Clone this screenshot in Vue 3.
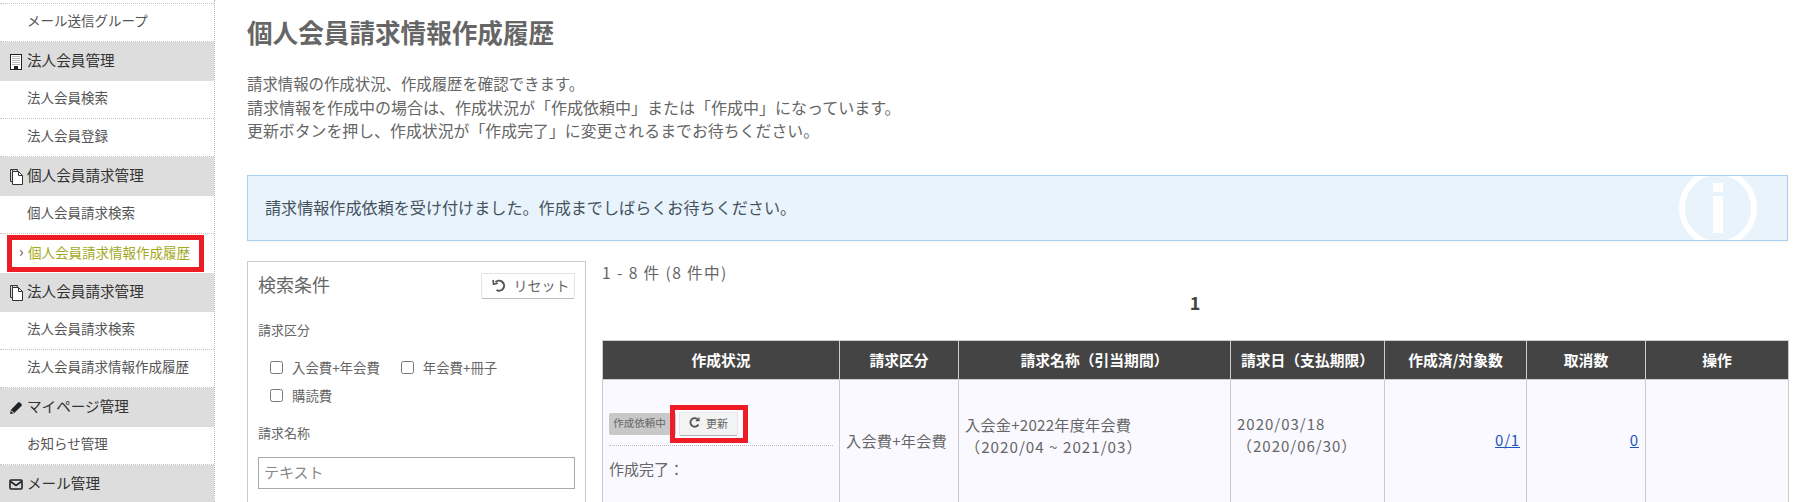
<script setup>
const menu = [
  { label: 'メール送信グループ', first: true },
  { label: '法人会員管理', head: true, icon: 'building' },
  { label: '法人会員検索' },
  { label: '法人会員登録' },
  { label: '個人会員請求管理', head: true, icon: 'file' },
  { label: '個人会員請求検索' },
  { label: '個人会員請求情報作成履歴', active: true },
  { label: '法人会員請求管理', head: true, icon: 'file' },
  { label: '法人会員請求検索' },
  { label: '法人会員請求情報作成履歴' },
  { label: 'マイページ管理', head: true, icon: 'pencil' },
  { label: 'お知らせ管理' },
  { label: 'メール管理', head: true, icon: 'mail' },
]
const columns = ['作成状況', '請求区分', '請求名称（引当期間）', '請求日（支払期限）', '作成済/対象数', '取消数', '操作']
const widths = [237, 119, 272, 154, 142, 119, 143]
</script>

<template>
  <div class="page">
    <aside class="side">
      <div
        v-for="m in menu"
        :key="m.label"
        :class="m.head ? 'head' : 'item'"
        class="row"
        :data-first="m.first ? '' : null"
        :data-active="m.active ? '' : null"
      >
        <span v-if="m.head" class="ico">
          <svg v-if="m.icon === 'building'" width="14" height="16" viewBox="0 0 14 16">
            <rect x="1.5" y="0.5" width="11" height="15" fill="#fff" stroke="#222" />
            <path d="M3.5 2.5h7M3.5 4.5h7M3.5 6.5h7M3.5 8.5h7M3.5 10.5h7" stroke="#777" stroke-dasharray="1 1" />
            <rect x="5" y="12" width="4" height="3.5" fill="#222" />
          </svg>
          <svg v-else-if="m.icon === 'file'" width="15" height="17" viewBox="0 0 15 17" fill="none" stroke="#333">
            <path d="M3.5 3.5V1.5h5l-.5 2" />
            <path d="M1.5 3.5v-2h2M1.5 3.5v10h2" />
            <path d="M3.5 3.5h6l4 4v9h-10z" fill="#fff" />
            <path d="M9.5 3.5v4h4" />
          </svg>
          <svg v-else-if="m.icon === 'pencil'" width="14" height="14" viewBox="0 0 14 14">
            <path d="M1 13l.8-4L9 1.6c.6-.6 1.4-.6 2 0l1.4 1.4c.6.6.6 1.4 0 2L5 12.2z" fill="#222" />
            <path d="M2 9.5l2.5 2.5" stroke="#fff" />
          </svg>
          <svg v-else width="14" height="11" viewBox="0 0 14 11" fill="none" stroke="#222" stroke-width="1.6">
            <rect x="1" y="1" width="12" height="9" rx="1" />
            <path d="M1.5 2.5L7 6.5l5.5-4" />
          </svg>
        </span>
        <span v-if="m.active" class="chev">›</span>
        <span>{{ m.label }}</span>
        <span v-if="m.active" class="mark"></span>
      </div>
    </aside>

    <main class="main">
      <h1 class="title">個人会員請求情報作成履歴</h1>
      <div class="desc">
        <div class="l1">請求情報の作成状況、作成履歴を確認できます。</div>
        <div class="l2">請求情報を作成中の場合は、作成状況が「作成依頼中」または「作成中」になっています。</div>
        <div class="l3">更新ボタンを押し、作成状況が「作成完了」に変更されるまでお待ちください。</div>
      </div>

      <div class="alert">
        <span>請求情報作成依頼を受け付けました。作成までしばらくお待ちください。</span>
        <svg class="alert-ico" width="78" height="78" viewBox="0 0 78 78">
          <circle cx="39" cy="39" r="36" fill="none" stroke="#fff" stroke-width="6" />
          <rect x="34" y="14" width="10" height="9" fill="#fff" />
          <rect x="34" y="27" width="10" height="37" fill="#fff" />
        </svg>
      </div>

      <div class="split">
        <section class="panel">
          <div class="panel-head">
            <span class="panel-title">検索条件</span>
            <button class="reset">
              <svg width="14" height="13" viewBox="0 0 14 13" fill="none" stroke="#555" stroke-width="2">
                <path d="M3.5 3.2A5 5 0 1 1 4.5 11" />
                <path d="M1 .8l.6 4.4 4.2-.9" stroke-width="1.6" />
              </svg>
              リセット
            </button>
          </div>
          <div class="label lab1">請求区分</div>
          <div class="checks">
            <label class="chk"><input type="checkbox" />入会費+年会費</label>
            <label class="chk"><input type="checkbox" />年会費+冊子</label>
            <label class="chk"><input type="checkbox" />購読費</label>
          </div>
          <div class="label lab2">請求名称</div>
          <input class="text" type="text" placeholder="テキスト" />
        </section>

        <section class="result">
          <div class="count">1 - 8 件 (8 件中)</div>
          <div class="pager">1</div>
          <table class="tbl">
            <colgroup>
              <col v-for="w in widths" :key="w" :width="w" />
            </colgroup>
            <thead>
              <tr><th v-for="c in columns" :key="c">{{ c }}</th></tr>
            </thead>
            <tbody>
              <tr>
                <td class="status">
                  <div class="status-row">
                    <span class="badge">作成依頼中</span>
                    <button class="refresh">
                      <svg width="11" height="11" viewBox="0 0 11 11" fill="none" stroke="#555" stroke-width="1.8">
                        <path d="M9.3 3A4.3 4.3 0 1 0 9.5 7.5" />
                        <path d="M10 .5v3.2H6.8" stroke-width="1.2" />
                      </svg>
                      更新
                      <span class="mark"></span>
                    </button>
                  </div>
                  <div class="done">作成完了：</div>
                </td>
                <td class="wide">入会費+年会費</td>
                <td class="wide two">入会金+2022年度年会費<br /><span class="lat">（2020/04 ~ 2021/03）</span></td>
                <td class="two"><span class="lat">2020/03/18</span><br /><span class="lat">（2020/06/30）</span></td>
                <td class="num"><a href="#">0/1</a></td>
                <td class="num"><a href="#">0</a></td>
                <td></td>
              </tr>
            </tbody>
          </table>
        </section>
      </div>
    </main>
  </div>
</template>

<style>
html, body { margin: 0; overflow: hidden; background: #fff; }
</style>

<style scoped>
.page {
  display: flex;
  height: 502px;
  overflow: hidden;
  font-family: "Noto Sans CJK JP", "Noto Sans", sans-serif;
  color: #666;
  font-size: 15px;
}
.side {
  flex: 0 0 214px;
  box-sizing: content-box;
  padding-top: 3px;
  border-right: 1px dotted #bbb;
}
.row {
  position: relative;
  box-sizing: border-box;
  display: flex;
  align-items: center;
}
.item {
  height: 38px;
  padding: 0 0 6px 27px;
  font-size: 13.5px;
  color: #555;
  border-bottom: 1px dotted #c4c4c4;
}
.item[data-first] { height: 39px; border-top: 1px dotted #c4c4c4; }
.item[data-active] { height: 39px; padding-bottom: 4px; color: #a3a822; border-bottom: 0; }
.head {
  height: 39px;
  background: #ddd;
  padding: 0 0 4px 27px;
  font-size: 14.6px;
  color: #333;
}
.ico {
  position: absolute;
  left: 8px;
  top: 0;
  bottom: 0;
  width: 16px;
  display: flex;
  align-items: center;
  justify-content: center;
}
.chev {
  position: absolute;
  left: 19px;
  top: 7px;
  font-size: 15px;
  line-height: 20px;
  color: #555;
}
.item[data-active] > span:nth-child(2) { margin-left: 1px; }
.mark {
  position: absolute;
  box-sizing: border-box;
  border: 5px solid #ee1c25;
  pointer-events: none;
}
.row .mark { left: 7px; width: 197px; top: 1px; bottom: 1px; }
.main {
  flex: 1;
  min-width: 0;
  padding: 15px 30px 0 32px;
}
.title {
  margin: 0;
  font-size: 25.6px;
  line-height: 34px;
  font-weight: 700;
  color: #666;
}
.desc {
  margin: 22px 0 0;
  line-height: 24px;
  color: #666;
}
.l1 { font-size: 15.4px; }
.l2 { font-size: 16px; }
.l3 { font-size: 15.9px; }
.alert {
  position: relative;
  margin-top: 32px;
  height: 66px;
  box-sizing: border-box;
  display: flex;
  align-items: center;
  padding: 0 0 2px 17px;
  background: #e8f3fc;
  border: 1px solid #a9d0f0;
  box-shadow: 0 1px 3px rgba(0, 0, 0, .05);
  overflow: hidden;
  font-size: 16.1px;
  color: #44525f;
}
.alert-ico { position: absolute; right: 30px; top: -7px; }
.split { display: flex; gap: 16px; margin-top: 20px; }
.panel {
  flex: 0 0 339px;
  box-sizing: border-box;
  height: 300px;
  padding: 11px 10px 0;
  border: 1px solid #ccc;
}
.panel-head { display: flex; justify-content: space-between; align-items: center; }
.panel-title { font-size: 18px; line-height: 21px; margin-bottom: 4px; color: #666; }
.reset {
  box-sizing: border-box;
  width: 94px;
  height: 26px;
  display: flex;
  align-items: center;
  justify-content: center;
  gap: 8px;
  padding: 0 0 2px 5px;
  font: inherit;
  font-size: 14px;
  color: #666;
  background: #fff;
  border: 1px solid #e4e4e4;
  border-bottom-color: #bbb;
  border-radius: 2px;
}
.label { font-size: 13px; line-height: 20px; color: #666; }
.lab1 { margin-top: 21px; }
.lab2 { margin-top: 14px; }
.checks {
  display: flex;
  flex-wrap: wrap;
  margin-top: 13px;
  padding-left: 12px;
}
.chk {
  display: flex;
  align-items: center;
  gap: 9px;
  height: 28px;
  margin-right: 21px;
  font-size: 13.4px;
  color: #666;
}
.chk input { margin: 0; width: 13px; height: 13px; }
.text {
  display: block;
  width: 100%;
  box-sizing: border-box;
  height: 32px;
  margin-top: 14px;
  padding: 0 5px 3px;
  font: inherit;
  font-size: 15px;
  color: #666;
  border: 1px solid #aaa;
  border-radius: 0;
  outline: none;
}
.text::placeholder { color: #888; }
.result { flex: 1; min-width: 0; }
.count { font-size: 15.6px; line-height: 22px; letter-spacing: 1.4px; color: #666; }
.pager {
  margin-top: 7px;
  height: 25px;
  text-align: center;
  font-size: 18px;
  line-height: 24px;
  font-weight: 700;
  color: #444;
}
.tbl {
  margin-top: 25px;
  width: 1186px;
  table-layout: fixed;
  border-collapse: collapse;
  font-size: 15px;
}
.tbl th {
  box-sizing: border-box;
  height: 39px;
  padding: 0 0 1px;
  background: #444;
  color: #fff;
  font-size: 14.8px;
  font-weight: 700;
  border: 1px solid #ccc;
}
.tbl td {
  box-sizing: border-box;
  height: 124px;
  padding: 0 6px 4px;
  background: #f9f9ff;
  border: 1px solid #ccc;
  line-height: 22px;
  color: #666;
}
.tbl td.two { padding-bottom: 13px; }
.tbl .status { vertical-align: top; padding-top: 32px; }
.status-row {
  display: flex;
  align-items: center;
  gap: 3px;
  height: 24px;
  padding-bottom: 9px;
  border-bottom: 1px dotted #bbb;
  box-sizing: content-box;
}
.badge {
  box-sizing: border-box;
  width: 67px;
  height: 22px;
  padding: 0 6px 0 0;
  text-align: center;
  font-size: 10.5px;
  line-height: 19px;
  color: #666;
  background: #c8c8c8;
  border-radius: 2px;
  white-space: nowrap;
}
.refresh {
  position: relative;
  box-sizing: border-box;
  width: 59px;
  height: 24px;
  display: flex;
  align-items: center;
  justify-content: center;
  gap: 6px;
  padding: 0 0 3px;
  font: inherit;
  font-size: 11px;
  color: #666;
  background: #f3f3f3;
  border: 1px solid #e6e6e6;
  border-bottom-color: #b5b5b5;
  border-radius: 2px;
}
.refresh .mark { left: -10px; right: -11px; top: -8px; bottom: -8px; }
.done { margin-top: 12px; }
.wide { font-size: 15.2px; letter-spacing: .2px; }
.lat { letter-spacing: 1px; }
.num { text-align: right; }
.num a { color: #1c55c0; letter-spacing: .8px; }
</style>
